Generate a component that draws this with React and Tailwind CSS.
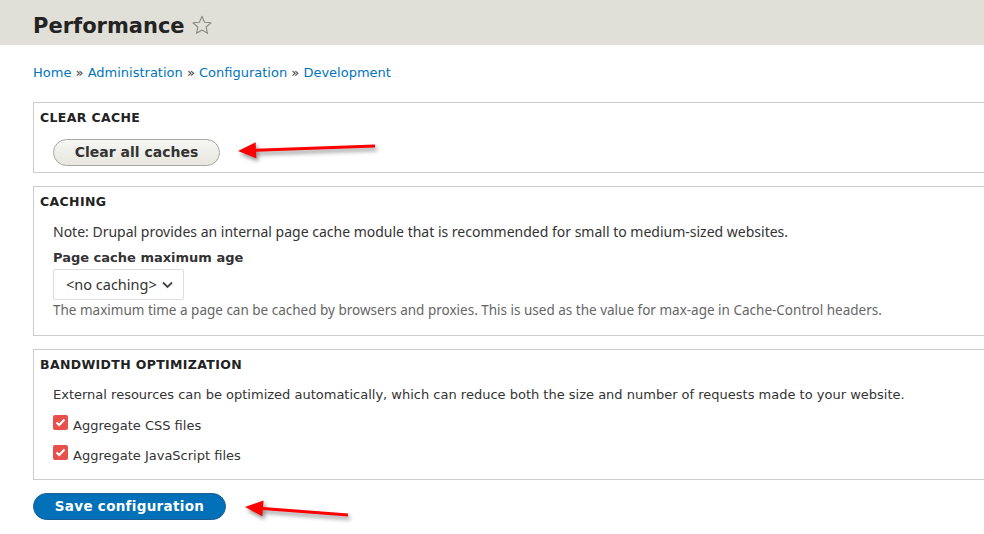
import React from 'react';

const dv = { fontFamily: '"DejaVu Sans", sans-serif' };
const noto = { fontFamily: '"Noto Sans", sans-serif' };

function Arrow({ className, x1, y1, x2, y2 }) {
  // tail (x1,y1) -> tip (x2,y2), head drawn at the tip
  const ang = Math.atan2(y2 - y1, x2 - x1);
  const len = 18;
  const half = 8;
  const bx = x2 - Math.cos(ang) * len;
  const by = y2 - Math.sin(ang) * len;
  const px = -Math.sin(ang) * half;
  const py = Math.cos(ang) * half;
  return (
    <svg className={className} width="984" height="534" viewBox="0 0 984 534" style={{ filter: 'drop-shadow(2px 3px 2px rgba(0,0,0,0.45))' }}>
      <line x1={x1} y1={y1} x2={bx} y2={by} stroke="#ff0000" strokeWidth="3" />
      <polygon points={`${x2},${y2} ${bx + px},${by + py} ${bx - px},${by - py}`} fill="#ff0000" />
    </svg>
  );
}

function Check({ label }) {
  return (
    <label className="h-[20px] flex items-center gap-[5px] text-[13px] leading-[18px] text-[#333]">
      <span className="w-[15px] h-[15px] rounded-[2px] bg-[#e8504a] flex items-center justify-center">
        <svg width="11" height="9" viewBox="0 0 11 9">
          <path d="M1.5 4.5 L4.2 7 L9.5 1.5" stroke="white" strokeWidth="2" fill="none" />
        </svg>
      </span>
      <span className="mt-[7px]">{label}</span>
    </label>
  );
}

export default function App() {
  return (
    <div className="relative w-[984px] h-[534px] overflow-hidden bg-white text-[#333]" style={dv}>
      <div className="h-[45px] bg-[#e0e0d8] px-[33px] flex items-center">
        <h1 className="mt-[6px] text-[21px] leading-[26px] font-bold text-[#232323] flex items-center gap-[6px]">
          Performance
          <svg width="22" height="22" viewBox="0 0 24 24" className="-mt-[2px]">
            <path d="M12 2.5 L14.8 9 L21.8 9.6 L16.5 14.2 L18.1 21.1 L12 17.4 L5.9 21.1 L7.5 14.2 L2.2 9.6 L9.2 9 Z" fill="none" stroke="#8a8a80" strokeWidth="1.2" strokeLinejoin="round" />
          </svg>
        </h1>
      </div>

      <div className="px-[33px]">
        <nav className="mt-[18px] text-[13px] leading-[20px] text-[#0074bd]">
          Home <span className="text-[#333]">»</span> Administration <span className="text-[#333]">»</span> Configuration <span className="text-[#333]">»</span> Development
        </nav>

        <div className="mt-[19px] w-[1000px] border border-[#ccc] h-[71px] px-[6px] pt-[7px]">
          <div className="text-[12.5px] leading-[16px] font-bold tracking-[0.35px] text-[#222]">CLEAR CACHE</div>
          <button className="mt-[13px] ml-[13px] w-[167px] h-[27px] rounded-full border border-[#a6a6a6] bg-gradient-to-b from-[#f6f6f3] to-[#e7e7df] text-[14px] font-bold text-[#333]">
            Clear all caches
          </button>
        </div>

        <div className="mt-[13px] w-[1000px] border border-[#ccc] h-[150px] px-[6px] pt-[7px]">
          <div className="text-[12.5px] leading-[16px] font-bold tracking-[0.35px] text-[#222]">CACHING</div>
          <div className="pl-[13px]">
            <p className="mt-[12px] text-[14px] leading-[20px] text-[#333]" style={noto}>
              Note: Drupal provides an internal page cache module that is recommended for small to medium-sized websites.
            </p>
            <div className="mt-[7px] text-[13px] leading-[18px] font-bold">Page cache maximum age</div>
            <div className="mt-[2px] w-[131px] h-[31px] border border-[#ddd] rounded-[2px] flex items-center justify-between pl-[12px] pr-[10px] text-[14.5px]" style={noto}>
              <span>&lt;no caching&gt;</span>
              <svg width="11" height="8" viewBox="0 0 11 8">
                <path d="M1 1.5 L5.5 6 L10 1.5" stroke="#444" strokeWidth="1.8" fill="none" />
              </svg>
            </div>
            <p className="mt-[1px] text-[13.5px] leading-[18px] text-[#666]" style={noto}>
              The maximum time a page can be cached by browsers and proxies. This is used as the value for max-age in Cache-Control headers.
            </p>
          </div>
        </div>

        <div className="mt-[13px] w-[1000px] border border-[#ccc] h-[131px] px-[6px] pt-[7px]">
          <div className="text-[12.5px] leading-[16px] font-bold tracking-[0.35px] text-[#222]">BANDWIDTH OPTIMIZATION</div>
          <div className="pl-[13px]">
            <p className="mt-[12px] text-[13px] leading-[20px] text-[#333]">
              External resources can be optimized automatically, which can reduce both the size and number of requests made to your website.
            </p>
            <div className="mt-[7px] flex flex-col gap-[10px]">
              <Check label="Aggregate CSS files" />
              <Check label="Aggregate JavaScript files" />
            </div>
          </div>
        </div>

        <button className="mt-[13px] w-[193px] h-[27px] rounded-full bg-[#0071b8] border border-[#1e5c90] text-white text-[13.5px] font-bold tracking-[0.3px]">
          Save configuration
        </button>
      </div>

      <Arrow className="absolute left-0 top-0 pointer-events-none" x1={375} y1={146} x2={238} y2={151} />
      <Arrow className="absolute left-0 top-0 pointer-events-none" x1={348} y1={515} x2={245} y2={507} />
    </div>
  );
}
